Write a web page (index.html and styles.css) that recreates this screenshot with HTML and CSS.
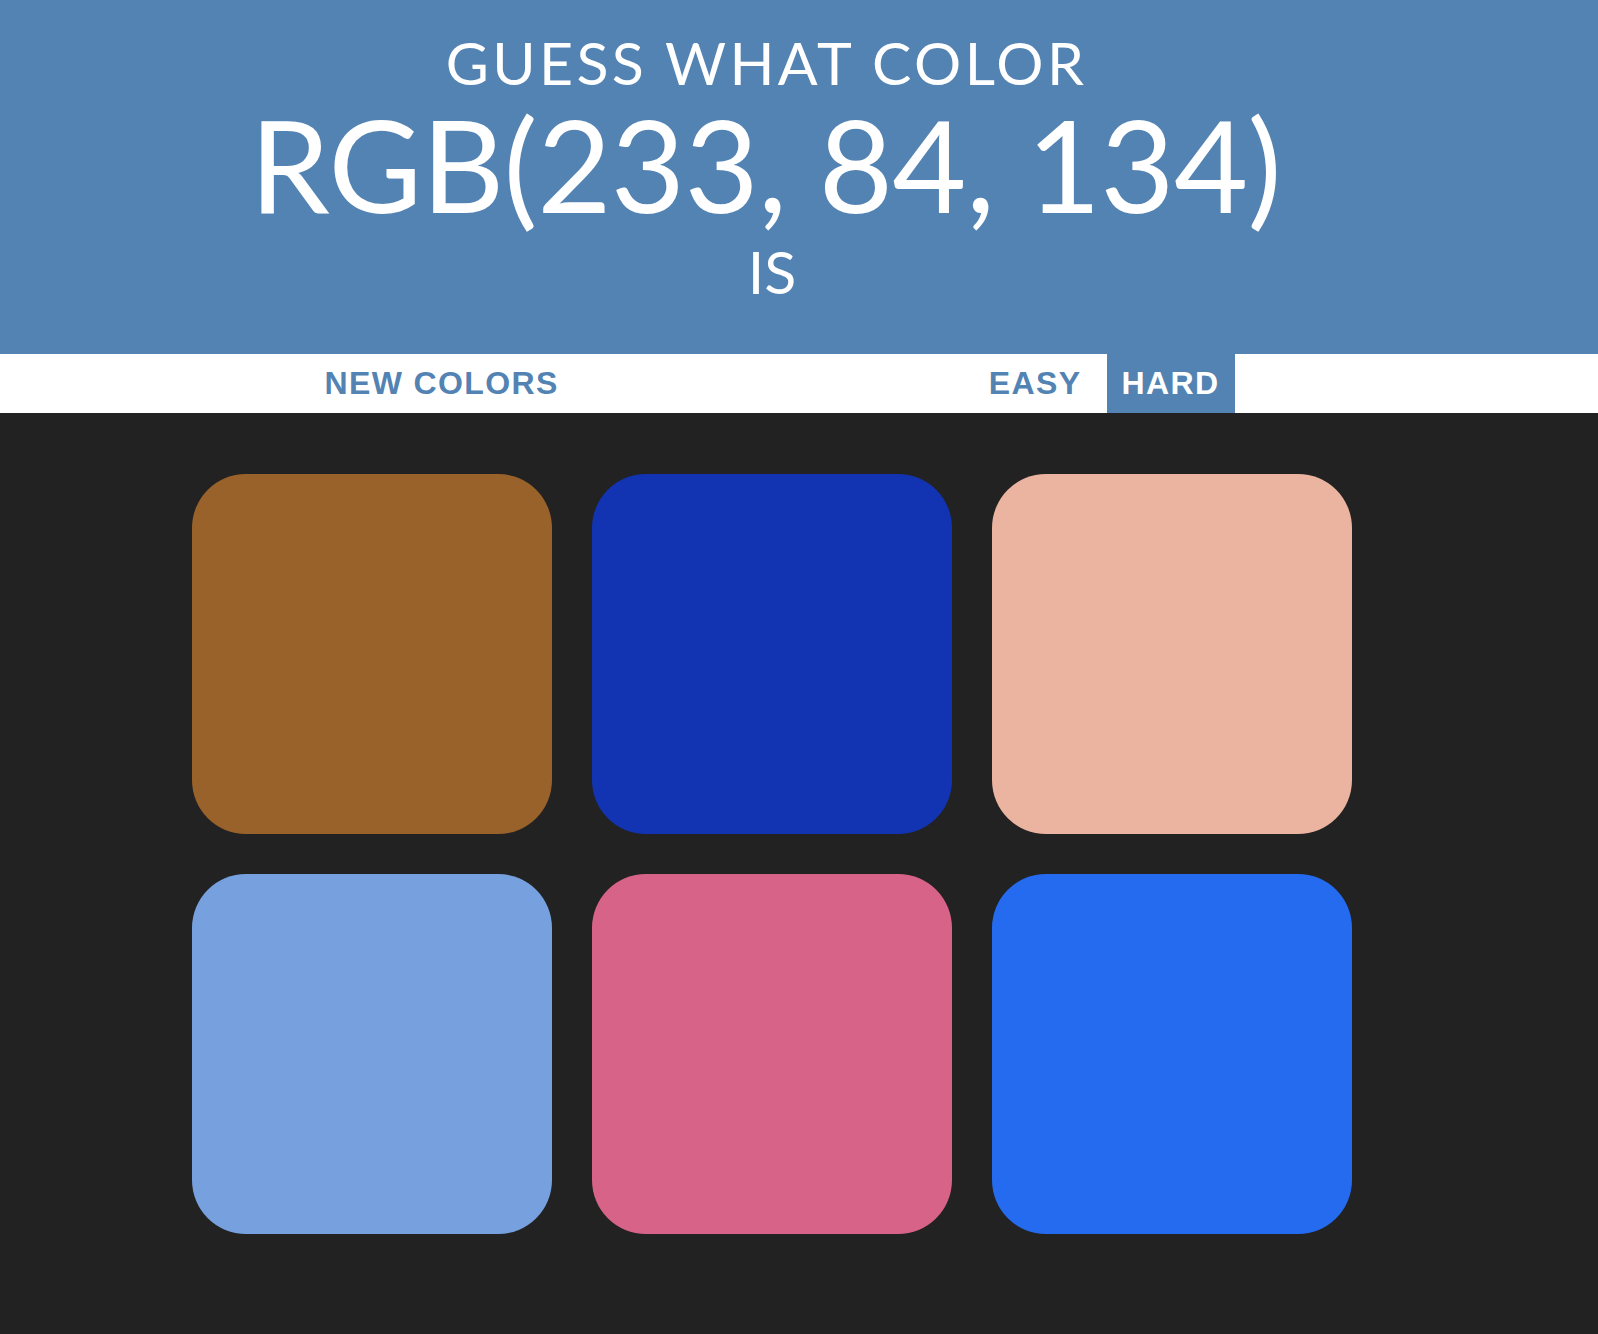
FILE: index.html
```html
<!DOCTYPE html>
<html lang="en">
<head>
<meta charset="utf-8">
<title>Color Game</title>
<link rel="stylesheet" href="styles.css">
</head>
<body>
<h1 class="title">
  <span class="title-line title-guess">GUESS WHAT COLOR</span>
  <span class="title-rgb">RGB(233, 84, 134)</span>
  <span class="title-line title-is">IS</span>
</h1>
<div class="stripe">
  <div class="stripe-inner">
    <button class="btn btn-reset">NEW COLORS</button>
    <span class="message"></span>
    <button class="btn btn-easy">EASY</button>
    <button class="btn selected">HARD</button>
  </div>
</div>
<div class="board">
  <div class="grid">
    <div class="square sq-brown"></div>
    <div class="square sq-navy"></div>
    <div class="square sq-peach"></div>
    <div class="square sq-sky"></div>
    <div class="square sq-pink"></div>
    <div class="square sq-blue"></div>
  </div>
</div>
</body>
</html>
```
FILE: styles.css
```css
html, body {
  margin: 0;
  padding: 0;
  background: #222222;
  min-height: 100%;
}
body {
  font-family: Lato, "Noto Sans", sans-serif;
}
.title {
  margin: 0;
  background: #5383b3;
  color: #ffffff;
  font-weight: 400;
  text-align: center;
  padding: 33px 54px 53px 0;
}
.title-line {
  display: block;
  font-size: 59px;
  line-height: 59px;
}
.title-guess {
  letter-spacing: 3.4px;
  padding-right: 11px;
}
.title-rgb {
  display: block;
  font-size: 128px;
  line-height: 128px;
  letter-spacing: -0.6px;
  padding-right: 13px;
  margin: 8px 0 14px;
}
.stripe {
  background: #ffffff;
  height: 59px;
}
.stripe-inner {
  width: 1544px;
  height: 100%;
  display: flex;
  justify-content: center;
  align-items: stretch;
}
.btn {
  border: none;
  background: #ffffff;
  color: #5383b3;
  font-family: "Liberation Sans", Arial, sans-serif;
  font-weight: 700;
  font-size: 32px;
  letter-spacing: 1.4px;
  padding: 0 15px;
  margin: 0;
  height: 59px;
  cursor: pointer;
  text-transform: uppercase;
}
.btn-easy {
  padding-right: 25px;
}
.btn.selected {
  background: #5383b3;
  color: #ffffff;
}
.message {
  width: 400px;
}
.board {
  width: 1544px;
}
.grid {
  width: 1160px;
  margin: 0 auto;
  padding-top: 61px;
  display: grid;
  grid-template-columns: repeat(3, 360px);
  grid-auto-rows: 360px;
  gap: 40px;
}
.square {
  border-radius: 15%;
}
.sq-brown { background: #9a622b; }
.sq-navy { background: #1334b2; }
.sq-peach { background: #ebb4a0; }
.sq-sky { background: #76a1de; }
.sq-pink { background: #d86388; }
.sq-blue { background: #246bef; }
```
